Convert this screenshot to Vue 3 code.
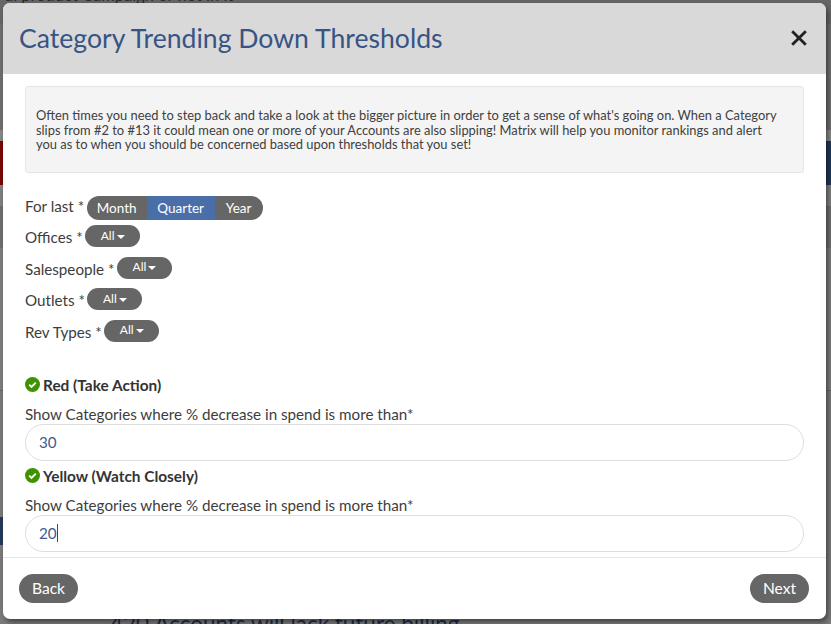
<script setup>
const filters = [
  { label: 'Offices *' },
  { label: 'Salespeople *' },
  { label: 'Outlets *' },
  { label: 'Rev Types *' }
]
const spans = [
  { name: 'Month', cls: 'm' },
  { name: 'Quarter', cls: 'q2 on' },
  { name: 'Year', cls: 'y' }
]
</script>

<template>
  <div class="page">
    <div class="backdrop">
      <div class="bg-top">al product Campaign or not in it</div>
      <div class="bg-band"></div>
      <div class="bg-mark"></div>
      <div class="bg-bottom">420 Accounts will lack future billing</div>
    </div>
    <div class="modal">
      <header class="head">
        <h1>Category Trending Down Thresholds</h1>
        <svg class="close" width="16" height="16" viewBox="0 0 16 16"><path d="M1.2 1.2 14.8 14.8M14.8 1.2 1.2 14.8" stroke="#212121" stroke-width="2.8" fill="none"/></svg>
      </header>
      <main class="body">
        <div class="well">Often times you need to step back and take a look at the bigger picture in order to get a sense of what's going on. When a Category slips from #2 to #13 it could mean one or more of your Accounts are also slipping! Matrix will help you monitor rankings and alert you as to when you should be concerned based upon thresholds that you set!</div>
        <div class="row first">
          <span class="lbl">For last *</span>
          <div class="seg">
            <span v-for="s in spans" :key="s.name" class="seg-item" :class="s.cls">{{ s.name }}</span>
          </div>
        </div>
        <div v-for="f in filters" :key="f.label" class="row">
          <span class="lbl">{{ f.label }}</span>
          <span class="drop">All<i class="caret"></i></span>
        </div>
        <div class="level red">
          <svg width="15" height="15" viewBox="0 0 15 15"><circle cx="7.5" cy="7.5" r="7.5" fill="#3f9200"/><path d="M4.2 7.7 6.5 10 10.8 5.6" stroke="#fff" stroke-width="1.9" fill="none"/></svg>
          <b>Red (Take Action)</b>
        </div>
        <div class="q">Show Categories where % decrease in spend is more than*</div>
        <div class="field">30</div>
        <div class="level">
          <svg width="15" height="15" viewBox="0 0 15 15"><circle cx="7.5" cy="7.5" r="7.5" fill="#3f9200"/><path d="M4.2 7.7 6.5 10 10.8 5.6" stroke="#fff" stroke-width="1.9" fill="none"/></svg>
          <b>Yellow (Watch Closely)</b>
        </div>
        <div class="q">Show Categories where % decrease in spend is more than*</div>
        <div class="field">20<i class="cursor"></i></div>
      </main>
      <footer class="foot">
        <button class="btn">Back</button>
        <button class="btn">Next</button>
      </footer>
    </div>
  </div>
</template>

<style scoped>
.page {
  position: relative;
  width: 831px;
  height: 624px;
  overflow: hidden;
  font-family: Lato, "Open Sans", sans-serif;
  color: #3d3d3d;
}
.backdrop {
  position: absolute; inset: 0;
  background: linear-gradient(180deg,
    #666 0 24px, #6e6e6e 24px 130px, #888 130px 141px,
    #808080 141px 206px, #6f6f6f 206px 248px, #7d7d7d 248px 390px,
    #666 390px 391px, #7a7a7a 391px);
}
.bg-top {
  position: absolute; left: 5px; top: -15px;
  font-size: 16.5px; line-height: 20px; color: #2a2a2a; white-space: nowrap;
}
.bg-band {
  position: absolute; left: 0; right: 0; top: 141px; height: 44px;
  background: linear-gradient(90deg, #7a0606 0 40px, #22375a 40px);
}
.bg-mark {
  position: absolute; left: 0; top: 517px; width: 3px; height: 28px; background: #24385a;
}
.bg-bottom {
  position: absolute; left: 110px; top: 610px;
  font-size: 22.5px; line-height: 28px; color: #1e2c45; white-space: nowrap;
}
.modal {
  position: absolute; left: 3px; top: 3px;
  width: 823px; height: 616px;
  background: #fff;
  border-radius: 7px;
  overflow: hidden;
  box-shadow: 2px 3px 5px rgba(0, 0, 0, .45);
  display: flex; flex-direction: column;
}
.head {
  height: 71px; flex: none; box-sizing: border-box;
  background: #d9d9d9;
  display: flex; align-items: center; justify-content: space-between;
  padding: 0 19px 2px 16px;
}
h1 {
  margin: 0; font-size: 26.6px; font-weight: 400; color: #375484; line-height: 40px;
}
.close { display: block; }
.body { flex: 1; padding: 12px 22px 0; min-height: 0; }
.well {
  height: 87px; box-sizing: border-box;
  padding: 21px 22px 0 10px;
  background: #f4f4f4; border: 1px solid #e5e5e5; border-radius: 3px;
  font-size: 12.9px; line-height: 14.5px; color: #404040;
}
.row { display: flex; align-items: center; height: 22px; margin-top: 9.5px; gap: 2.5px; font-size: 15.2px; }
.row.first { height: 24px; margin-top: 23px; }
.row.first + .row { margin-top: 5px; }
.lbl { line-height: 22px; position: relative; top: 1px; }
.first .lbl { top: -2px; }
.seg { display: flex; height: 24px; border-radius: 12px; overflow: hidden; background: #666; color: #fff; font-size: 13.5px; line-height: 24px; }
.seg-item { text-align: center; }
.seg-item.m { width: 60px; }
.seg-item.q2 { width: 68px; }
.seg-item.y { width: 48px; }
.seg-item.on { background: #4a6fa8; }
.drop {
  display: inline-flex; align-items: center; justify-content: center;
  width: 55px; height: 22px; border-radius: 11px;
  background: #666; color: #fff; font-size: 12px; padding-bottom: 2px; box-sizing: border-box;
}
.caret {
  width: 0; height: 0; margin: 3px 0 0 2px;
  border-left: 4px solid transparent; border-right: 4px solid transparent; border-top: 4px solid #fff;
}
.level { display: flex; align-items: center; gap: 3px; height: 20px; margin-top: 5px; font-size: 15.4px; color: #333; }
.level.red { margin-top: 33px; }
.level b { font-weight: 700; }
.q { font-size: 15.2px; line-height: 20px; margin-top: 9px; }
.field {
  height: 37px; box-sizing: border-box; margin-top: 0;
  border: 1px solid #ddd; border-radius: 19px;
  padding-left: 13px; font-size: 15.2px; line-height: 35px; color: #3f5a8c;
  display: flex; align-items: center;
}
.cursor { width: 1px; height: 18px; background: #2d4a78; }
.foot {
  height: 62px; flex: none; box-sizing: border-box;
  border-top: 1px solid #e5e5e5;
  padding: 16px 17px 0 16px;
  display: flex; justify-content: space-between; align-items: flex-start;
}
.btn {
  width: 59px; height: 29px; padding: 0 0 2px; border: 0; border-radius: 15px;
  background: #666; color: #fff; font: 400 15.6px Lato, sans-serif;
}
</style>

<style>
html, body { margin: 0; background: #757575; }
</style>
